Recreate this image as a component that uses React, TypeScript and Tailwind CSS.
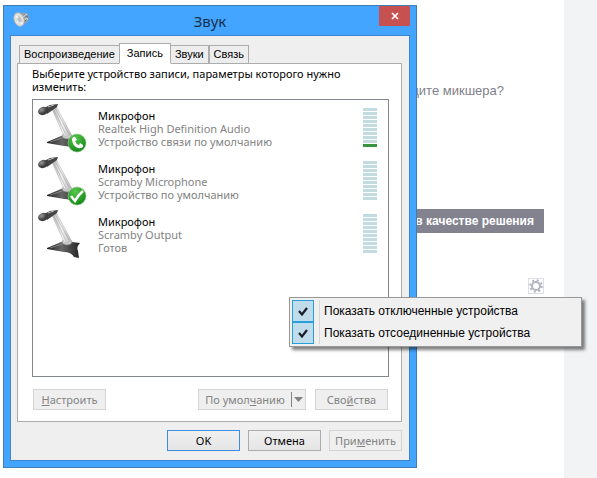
import { useState } from 'react';
import clsx from 'clsx';

type Badge = 'phone' | 'check' | null;

interface Device {
  name: string;
  driver: string;
  status: string;
  badge: Badge;
  level: number;
}

const TABS = ['Воспроизведение', 'Запись', 'Звуки', 'Связь'];

const DEVICES: Device[] = [
  { name: 'Микрофон', driver: 'Realtek High Definition Audio', status: 'Устройство связи по умолчанию', badge: 'phone', level: 1 },
  { name: 'Микрофон', driver: 'Scramby Microphone', status: 'Устройство по умолчанию', badge: 'check', level: 0 },
  { name: 'Микрофон', driver: 'Scramby Output', status: 'Готов', badge: null, level: 0 },
];

const BUTTON = 'flex h-[21px] items-center justify-center border leading-[13px]';
const DISABLED = 'border-[#d4d4d4] bg-[#efefef] text-[#838383]';

function SpeakerIcon() {
  return (
    <svg width="17" height="17" viewBox="0 0 17 17" aria-hidden="true">
      <path d="M5 1 9 2l4 0 2 2 1 3-2 4-4 3-3 2Z" fill="#9aa0a3" />
      <path d="m11 4 4 2M11 11l3-3" stroke="#5f6567" />
      <path d="m10 6 4-3M12 8h3" stroke="#e8eaea" />
      <ellipse cx="6" cy="8.500" rx="5" ry="7" transform="rotate(-22 6 8.500)" fill="#dfe1e0" stroke="#a5aaac" strokeWidth=".7" />
      <ellipse cx="6.500" cy="8.500" rx="2" ry="3" transform="rotate(-22 6.500 8.500)" fill="#bfc3c4" />
      <path d="m3 5 2 2M4 12l1-2M9 13l-1-2" stroke="#fff" />
    </svg>
  );
}

function MicrophoneIcon({ badge }: { badge: Badge }) {
  return (
    <svg width="52" height="52" viewBox="0 0 52 52" aria-hidden="true">
      <defs>
        <linearGradient id="arm" x1="0" x2="1" y1=".5" y2=".3">
          <stop offset="0" stopColor="#a4a4a4" />
          <stop offset=".5" stopColor="#f4f4f4" />
          <stop offset="1" stopColor="#a0a0a0" />
        </linearGradient>
        <linearGradient id="foot" x1="0" x2="1">
          <stop offset="0" stopColor="#222" />
          <stop offset=".45" stopColor="#666" />
          <stop offset="1" stopColor="#222" />
        </linearGradient>
        <radialGradient id="head" cx=".4" cy=".3">
          <stop offset="0" stopColor="#999" />
          <stop offset="1" stopColor="#3c3c3c" />
        </radialGradient>
        <radialGradient id="green" cx=".4" cy=".25" r=".8">
          <stop offset="0" stopColor="#58c94c" />
          <stop offset="1" stopColor="#128314" />
        </radialGradient>
      </defs>
      <path d="M11 40 25 34h11l8 1q-4 4-2 8l1 7-5-1q-3-5-10-5l-17-3Z" fill="url(#foot)" />
      <path d="m14 40 12-4" stroke="#aaa" strokeWidth=".6" />
      <ellipse cx="31" cy="34" rx="5" ry="3" fill="#c9c9c9" stroke="#777" strokeWidth=".6" />
      <path d="m15 5 5-1 15 28q-3 3-7 2Z" fill="url(#arm)" stroke="#aaa" strokeWidth=".5" />
      <path d="m17 6 13 27M19 6l14 26" stroke="#999" strokeWidth=".5" />
      <path d="m8 6 6-3 8-1-1 3-10 7Z" fill="#444" />
      <path d="m12 5 6-2" stroke="#bbb" />
      <ellipse cx="7" cy="9" rx="5" ry="4" transform="rotate(-20 7 9)" fill="url(#head)" />
      {badge && <circle cx="41" cy="41" r="9" fill="url(#green)" stroke="#8dcb88" strokeWidth=".7" />}
      {badge === 'phone' && (
        <path d="M36 37q1-3 3-2l2 3-2 1q1 3 4 4l1-2 3 2q1 2-2 3-2 1-5-1-4-3-4-8Z" fill="#fff" />
      )}
      {badge === 'check' && <path d="m35 41 4 5q3-6 8-10" fill="none" stroke="#fff" strokeWidth="2.500" />}
    </svg>
  );
}

function LevelMeter({ level }: { level: number }) {
  return (
    <div className="flex w-[14px] flex-col gap-px pt-[6px]">
      {Array.from({ length: 10 }, (_, i) => (
        <span key={i} className={clsx('h-[3px]', i >= 10 - level ? 'bg-[#3a943c]' : 'bg-[#c3dce1]')} />
      ))}
    </div>
  );
}

function DeviceRow({ device }: { device: Device }) {
  return (
    <li className="flex h-[53px] items-start pr-[11px] pl-[3px]">
      <MicrophoneIcon badge={device.badge} />
      <div className="flex-1 pt-[7px] pl-[10px] leading-[13px] text-[#838383]">
        <p className="text-black">{device.name}</p>
        <p>{device.driver}</p>
        <p>{device.status}</p>
      </div>
      <LevelMeter level={device.level} />
    </li>
  );
}

function SoundDialog() {
  const [tab, setTab] = useState('Запись');

  return (
    <section aria-label="Звук"
      className="absolute top-[5px] left-[3px] w-[414px] border border-[#3f7fb8] bg-[#43a5ff] px-[6px] pb-[6px] font-['Noto_Sans',sans-serif] text-[11px]">
      <header className="flex h-[29px] items-start pl-[3px]">
        <span className="pt-[5px]"><SpeakerIcon /></span>
        <h1 className="flex-1 pl-[11px] text-center text-[15px] leading-[30px] text-[#17304a]">Звук</h1>
        <button aria-label="Закрыть" className="flex h-[20px] w-[31px] items-center justify-center bg-[#c75050]">
          <svg width="8" height="8" viewBox="0 0 8 8"><path d="m1 1 6 6M7 1 1 7" stroke="#fff" strokeWidth="1.700" /></svg>
        </button>
      </header>

      <div className="border border-[#3f86c9] bg-[#efefef] pt-[7px] pr-[7px] pb-[9px] pl-[6px]">
        {/* Tabs */}
        <div role="tablist" className="flex h-[20px] items-end pl-[2px] font-['Liberation_Sans',sans-serif]">
          {TABS.map(t => (
            <button key={t} role="tab" aria-selected={t === tab} onClick={() => setTab(t)}
              className={clsx('border border-[#acacac] leading-[17px]',
                t === tab
                  ? 'relative -mx-px -mb-px h-[21px] border-b-white bg-white px-[7px]'
                  : 'h-[18px] border-b-0 bg-[#ededed] px-[4px]')}>
              {t}
            </button>
          ))}
        </div>

        <div className="border border-[#acacac] bg-white pt-[3px] pr-[12px] pb-[11px] pl-[14px]">
          <p className="leading-[13px]">Выберите устройство записи, параметры которого нужно изменить:</p>
          <ul className="mt-[6px] h-[278px] border border-[#828790] pt-[2px]">
            {DEVICES.map(d => <DeviceRow key={d.driver} device={d} />)}
          </ul>
          <div className="mt-[12px] flex justify-between px-px">
            <button disabled className={clsx(BUTTON, DISABLED, 'w-[73px]')}><u>Н</u>астроить</button>
            <div className="flex gap-[9px]">
              <button disabled className={clsx(BUTTON, DISABLED, 'w-[108px]')}>
                <span className="flex-1">По умол<u>ч</u>анию</span>
                <span className="flex h-[15px] w-[14px] items-center justify-center border-l border-[#838383]">
                  <svg width="9" height="5" viewBox="0 0 9 5"><path d="M0 0h9L4.500 5Z" fill="#838383" /></svg>
                </span>
              </button>
              <button disabled className={clsx(BUTTON, DISABLED, 'w-[73px]')}>Сво<u>й</u>ства</button>
            </div>
          </div>
        </div>

        <div className="mt-[8px] flex justify-end gap-[8px]">
          <button className={clsx(BUTTON, 'w-[73px] border-[#3c8de0] bg-linear-to-b from-[#f0f0f0] to-[#e5e5e5]')}>OK</button>
          <button className={clsx(BUTTON, 'w-[73px] border-[#acacac] bg-linear-to-b from-[#f0f0f0] to-[#e5e5e5]')}>Отмена</button>
          <button disabled className={clsx(BUTTON, DISABLED, 'w-[73px]')}>При<u>м</u>енить</button>
        </div>
      </div>
    </section>
  );
}

function MenuCheck({ label }: { label: string }) {
  const [checked, setChecked] = useState(true);
  return (
    <label className="flex h-[22px] items-center">
      <span className="relative flex size-[22px] items-center justify-center">
        <input type="checkbox" checked={checked} onChange={e => setChecked(e.target.checked)}
          className="absolute inset-0 appearance-none checked:border checked:border-[#26a0da] checked:bg-[#c0dcea]" />
        {checked && (
          <svg className="pointer-events-none relative" width="10" height="9" viewBox="0 0 10 9">
            <path d="m1 4 3 3.500L9 1" fill="none" stroke="#1c1f2b" strokeWidth="2.200" />
          </svg>
        )}
      </span>
      <span className="ml-[5px] flex h-full items-center border-l border-[#d7d7d7] pl-[4px]">{label}</span>
    </label>
  );
}

function ContextMenu() {
  return (
    <div className="absolute top-[297px] left-[289px] w-[293px] border border-[#979797] bg-[#f0f0f0] p-[2px] text-[12px] shadow-[3px_3px_3px_rgba(0,0,0,0.5)]">
      <MenuCheck label="Показать отключенные устройства" />
      <MenuCheck label="Показать отсоединенные устройства" />
    </div>
  );
}

export default function App() {
  return (
    <div className="relative flex min-h-screen bg-white font-['Liberation_Sans',sans-serif]">
      <main className="flex flex-1 flex-col items-end pr-[20px] text-[#7f7f8a]">
        <p className="mt-[82px] pr-[40px] text-[13px] leading-[18px]">дите микшера?</p>
        <button className="mt-[109px] h-[24px] w-[200px] bg-[#83828f] pr-[10px] text-right text-[12px] font-bold text-white">
          в качестве решения
        </button>
        <button aria-label="Настройки" className="mt-[45px] flex size-[16px] items-center justify-center border border-[#dddde5]">
          <svg width="14" height="14" viewBox="0 0 14 14" fill="none" stroke="#b3b3c1">
            <circle cx="7" cy="7" r="4" strokeWidth="2" />
            <circle cx="7" cy="7" r="5.800" strokeWidth="2" strokeDasharray="2 2.555" />
          </svg>
        </button>
      </main>
      <aside className="w-[33px] bg-[#f2f3f5]" />
      <SoundDialog />
      <ContextMenu />
    </div>
  );
}
